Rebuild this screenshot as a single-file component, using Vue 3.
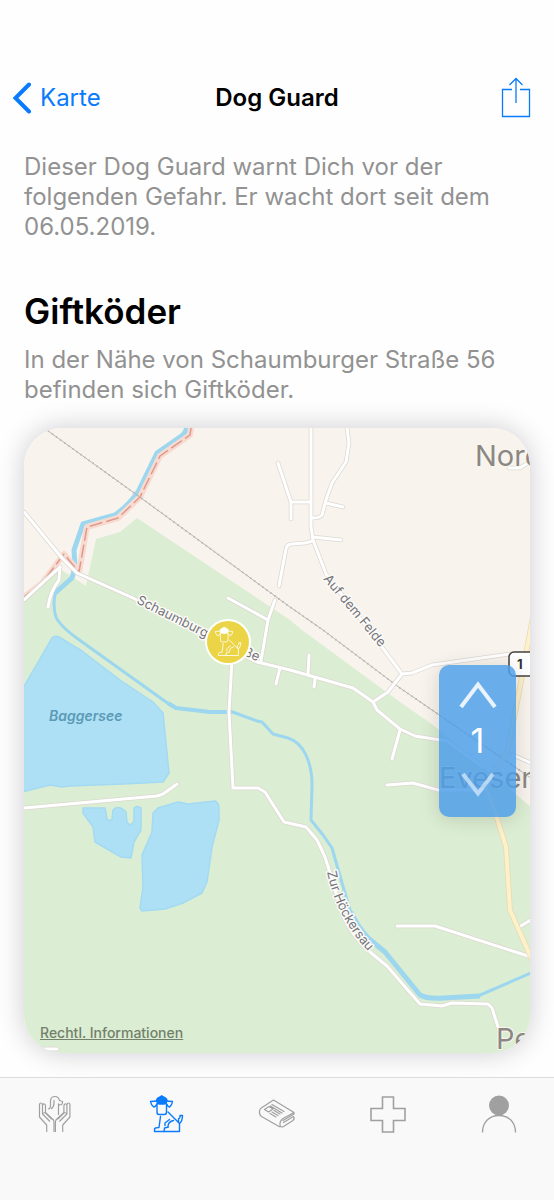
<script setup>
import { ref } from 'vue'

const level = ref(1)
const active = ref('guard')

const roads = [
  'M24 512L62 558L77 573L133 598L200 633L257 662L290 670L353 688L373 702L377 710L400 729L415 736L447 741L483 767',
  'M60 567L24 600',
  'M60 567L59 580Q50 592 48 607',
  'M373 702L388 692L402 674L412 673L432 665L510 654',
  'M402 674L382 647L326 574L313 540L311 527V428',
  'M347 428L349 443L346 462L332 483L326 500L322 515Q320 518 312 518',
  'M326 503L343 507',
  'M278 463L291 502V519M291 502H311',
  'M313 537L341 540',
  'M313 541L305 543L292 544Q287 544 286 549L279 586',
  'M275 600L268 620L261 661M228 598L268 620',
  'M309 655L308 674M280 668L276 684M315 679L314 687',
  'M400 730L392 759',
  'M387 785L413 783L438 790L487 790',
  'M513 755L531 763',
  'M232 660L229 712L233 788H258L265 792L284 822L306 827L317 840L325 857L330 873L342 913Q350 934 370 952L387 966L420 1004L442 1006L452 1003L488 1004L492 1008L499 1030',
  'M397 926H435L531 957',
  'M519 927L531 920',
  'M24 808L157 796L163 794L177 784',
  'M509 468H520L531 461',
  'M40 1049H57',
]
</script>

<template>
  <div class="screen">
    <svg class="defs" width="0" height="0" aria-hidden="true">
      <symbol id="dog" viewBox="0 0 35 38">
        <g fill="none" stroke="currentColor" stroke-linejoin="round" stroke-linecap="round">
          <path d="M7.500 5Q8 3 11 2L12.700 0.800L14.500 2Q17.500 3 18 5L17 8.500Q12.700 9.500 8.500 8.500Z" fill="currentColor" />
          <path d="M8 6L1.500 6.500Q2 10 4.700 12Q7 11.500 7.800 9M17.500 6L23.500 6.500Q23 10 20.700 12Q18.500 11.500 17.700 9" />
          <path d="M8 9.500V17Q8 19.500 10 19.500H15.500Q17.500 19.500 17.500 17V9.500" />
          <path d="M19 17L30.500 28.500Q33.500 26 33.500 20.500H31Q31.500 23 29.500 24V27" />
          <path d="M30.500 28.500V36.500H5.500V34Q6 32.500 10 32.500L11.500 21.500" />
          <path d="M15 36.500L15.500 33L19.500 32M16 30.500V28L20.500 24.500M24.500 25.500Q19.500 26.500 19 31" />
        </g>
      </symbol>
    </svg>

    <header class="nav">
      <a class="back" href="#karte">
        <svg width="20" height="32" viewBox="0 0 20 32" aria-hidden="true">
          <path d="M17 2.500L3.500 16L17 29.500" fill="none" stroke="currentColor" stroke-width="4" stroke-linecap="round" stroke-linejoin="miter" />
        </svg>
        <span>Karte</span>
      </a>
      <h1>Dog Guard</h1>
      <button class="share" type="button" aria-label="Teilen">
        <svg width="30" height="41" viewBox="0 0 30 41" fill="none" stroke="currentColor" stroke-width="1.300" aria-hidden="true">
          <path d="M11 12.500H1.500V39.500H28.500V12.500H19M15 26V1.500M8.500 8L15 1.500L21.500 8" />
        </svg>
      </button>
    </header>

    <main class="content">
      <p class="intro">Dieser Dog Guard warnt Dich vor der folgenden Gefahr. Er wacht dort seit dem 06.05.2019.</p>
      <h2>Giftköder</h2>
      <p>In der Nähe von Schaumburger Straße 56 befinden sich Giftköder.</p>

      <section class="map" aria-label="Karte der Umgebung">
        <svg class="tiles" viewBox="24 428 506 625">
          <rect x="24" y="428" width="507" height="625" fill="#f8f4ed" />
          <path fill="#dbedd2" d="M137 518L290 620L302 630L400 702L433 725L531 807V1053H24V602L60 569L86 586L96 539L120 532Z" />
          <g fill="#ade0f5" stroke="#a3daf3" stroke-width="1.500" stroke-linejoin="round">
            <path d="M22 690L52 638Q55 635 59 637L82 651L120 680L153 702L163 713L169 773L163 782L123 784L70 786L62 787L50 785L22 792Z" />
            <path d="M83 808H105L107 819Q110 822 112 819L113 810Q118 804 126 812L127 823L131 825L134 821V808Q137 805 141 808V830L134 842L131 858L121 857L95 842L93 827L83 813Z" />
            <path d="M153 813L158 808L178 802L188 804L215 801Q219 803 219 808V820L212 847L207 882L202 893L183 903L165 909L142 911L140 908L143 887L142 855L152 832Z" />
          </g>
          <g fill="none" stroke="#9cd7ef" stroke-linejoin="round">
            <path stroke-width="5" d="M187 426Q186 434 180 437L157 453L138 492Q128 506 115 515L83 524L74 550L75 567L72 578L55 593" />
            <path stroke-width="3" d="M56 590Q52 605 56 617Q60 626 78 639L173 707" />
            <path stroke-width="4" d="M168 703L176 708L210 712H232" />
            <path stroke-width="3" d="M230 711L257 721L262 722L273 734L288 738C304 743 312 763 312 785L311 820L323 835L332 848L342 883L350 910L362 932" />
            <path stroke-width="5" d="M351 912Q357 926 368 938L385 952L420 995Q427 999 443 998L480 996" />
            <path stroke-width="3" d="M478 996L531 973" />
          </g>
          <g fill="none" stroke-linejoin="round">
            <path stroke="#f8dbd0" stroke-width="6" d="M191 428L190 435L160 456L140 497L118 518L87 527L79 572L64 554L42 583L24 597" />
            <path stroke="#e0988d" stroke-width="1.500" stroke-dasharray="13 4" d="M191 428L190 435L160 456L140 497L118 518L87 527L79 572L64 554L42 583L24 597" />
          </g>
          <g fill="none" stroke="#b8b4b0">
            <path d="M44 428L137 495L290 607L323 630L400 688L531 778" />
            <path stroke-width="2" stroke-dasharray="1 4" d="M44 428L137 495L290 607L323 630L400 688L531 778" />
          </g>
          <g fill="none" stroke-linecap="round" stroke-linejoin="round">
            <path v-for="(d, i) in roads" :key="'c' + i" :d="d" stroke="#dcd8d2" stroke-width="4.500" />
            <path v-for="(d, i) in roads" :key="'f' + i" :d="d" stroke="#fff" stroke-width="3" />
            <path stroke="#ead9b4" stroke-width="5.500" d="M535 605L517 703L507 753L485 784L497 818L506 847L510 910L533 962" />
            <path stroke="#fdf1c9" stroke-width="4" d="M535 605L517 703L507 753L485 784L497 818L506 847L510 910L533 962" />
          </g>

          <path id="way-schaumburg" fill="none" d="M136 603L202 636L280 672" />
          <path id="way-felde" fill="none" d="M323 579L392 662" />
          <path id="way-hoecker" fill="none" d="M327 872Q338 925 380 963" />
          <g class="street">
            <text><textPath href="#way-schaumburg">Schaumburger Straße</textPath></text>
            <text><textPath href="#way-felde">Auf dem Felde</textPath></text>
            <text><textPath href="#way-hoecker">Zur Höckersau</textPath></text>
          </g>
          <text class="lake" x="49" y="721">Baggersee</text>
          <g class="place">
            <text x="475" y="466">Nord</text>
            <text x="439" y="788">Evesen</text>
            <text x="496" y="1049">Pe</text>
          </g>
          <rect x="509" y="652" width="34" height="24" rx="5" fill="#fff" stroke="#44423e" stroke-width="1.500" />
          <text class="route" x="517" y="669">1</text>

          <g class="pin">
            <circle cx="228" cy="642" r="23" fill="#fff" />
            <circle cx="228" cy="642" r="21" fill="#ebd546" />
            <use href="#dog" x="214" y="626" width="28" height="31" />
          </g>
        </svg>

        <a class="legal" href="#rechtliches">Rechtl. Informationen</a>

        <div class="stepper">
          <button type="button" aria-label="Mehr" @click="level++">
            <svg width="38" height="28" viewBox="0 0 38 28" aria-hidden="true">
              <path d="M2 26L19 3.500L36 26" />
            </svg>
          </button>
          <output>{{ level }}</output>
          <button class="less" type="button" aria-label="Weniger" @click="level = Math.max(1, level - 1)">
            <svg width="34" height="25" viewBox="0 0 34 25" aria-hidden="true">
              <path d="M2 2L17 21.500L32 2" />
            </svg>
          </button>
        </div>
      </section>
    </main>

    <nav class="tabs" aria-label="Hauptnavigation">
      <button type="button" aria-label="Helfen" :class="{ on: active === 'help' }" @click="active = 'help'">
        <svg width="34" height="38" viewBox="0 0 34 38" fill="none" stroke="currentColor" stroke-width="1.200" stroke-linejoin="round" aria-hidden="true">
          <path d="M8.700 37V30L1.500 22V9.500Q1.500 8 3 8Q4.500 8 4.500 10V19L12 26.500M4.500 10Q5 8.500 6.500 9Q7.500 9.500 7.500 11V17.500L15.500 25Q16 26 16 28V37M4.500 19Q6 16.500 8.500 19L13.500 24" />
          <path d="M24.700 37V30L31.900 22V9.500Q31.900 8 30.400 8Q28.900 8 28.900 10V19L21.400 26.500M28.900 10Q28.400 8.500 26.900 9Q25.900 9.500 25.900 11V17.500L17.900 25Q17.400 26 17.400 28V37M28.900 19Q27.400 16.500 24.900 19L19.900 24" />
          <path d="M10 14Q12.500 14 12.500 10V5.500Q13 1.500 17 1.500Q20.500 1.500 21.500 5.500L24.500 6.500Q25 10 21.500 10L20.500 9V20M16 5V8Q16 12 13 14" />
        </svg>
      </button>
      <button type="button" aria-label="Dog Guard" :class="{ on: active === 'guard' }" @click="active = 'guard'">
        <svg width="35" height="38" stroke-width="1.400" aria-hidden="true"><use href="#dog" /></svg>
      </button>
      <button type="button" aria-label="Neuigkeiten" :class="{ on: active === 'news' }" @click="active = 'news'">
        <svg width="38" height="32" viewBox="0 0 38 32" fill="none" stroke="currentColor" stroke-width="1.200" stroke-linejoin="round" stroke-linecap="round" aria-hidden="true">
          <path d="M21.500 28.700L3.500 18.500Q1 16.500 1.500 13Q2 10.500 4 9.500L15.500 2L36 14.500L25 20.500Q21.500 23 22 27Q22.500 30 25.500 28.500L35 22.500Q37 20.500 35.500 18.500L25.500 24.500M36 14.500V16L25 22.500" />
          <path d="M6.500 11.500L11 8.500L15 11L10.500 14ZM14 6.500L26 13.500M12.500 8L18 11.500M18 11.500L24 15M16 12.500L22 16M14 14L20 17.500M12 15.500L18 19" />
        </svg>
      </button>
      <button type="button" aria-label="Erste Hilfe" :class="{ on: active === 'aid' }" @click="active = 'aid'">
        <svg width="36" height="38" viewBox="0 0 36 38" fill="none" stroke="currentColor" stroke-width="1.600" aria-hidden="true">
          <path d="M12.500 2H23.500V13.500H35V25.500H23.500V37H12.500V25.500H1V13.500H12.500Z" />
        </svg>
      </button>
      <button type="button" aria-label="Profil" :class="{ on: active === 'me' }" @click="active = 'me'">
        <svg width="36" height="38" viewBox="0 0 36 38" fill="none" stroke="currentColor" stroke-width="1.300" aria-hidden="true">
          <circle cx="18" cy="10.500" r="10" fill="currentColor" stroke="none" />
          <path d="M1.500 37.500C1.500 27 8.500 20.500 18 20.500S34.500 27 34.500 37.500" />
        </svg>
      </button>
    </nav>
  </div>
</template>

<style>
body {
  background: #fefefe;
}
</style>

<style scoped>
.screen {
  min-height: 100vh;
  display: flex;
  flex-direction: column;
  font-family: Inter, "Liberation Sans", sans-serif;
  background: #fefefe;
  overflow: hidden;
}
.defs {
  position: absolute;
}
button {
  border: 0;
  padding: 0;
  background: none;
  font: inherit;
  color: inherit;
  cursor: pointer;
}
svg {
  display: block;
}
.nav {
  display: grid;
  grid-template-columns: 1fr auto 1fr;
  align-items: center;
  padding: 68px 12px 0;
  height: 60px;
  color: #0a7bfc;
}
.back {
  display: flex;
  align-items: center;
  gap: 8px;
  color: inherit;
  text-decoration: none;
  font-size: 24px;
  line-height: 30px;
}
.nav h1 {
  margin: 0;
  font-size: 24px;
  line-height: 30px;
  font-weight: 600;
  color: #000;
}
.share {
  justify-self: end;
  padding: 0 11px 2px;
}
.content {
  flex: 1;
  padding: 24px;
}
.content p {
  margin: 0;
  font-size: 24px;
  line-height: 30px;
  color: #929292;
}
.content h2 {
  margin: 48px 0 13px;
  font-size: 35px;
  line-height: 42px;
  font-weight: 600;
  color: #000;
}
.map {
  position: relative;
  margin-top: 23px;
  border-radius: 38px;
  box-shadow: 0 0 28px rgba(0, 0, 30, 0.2);
}
.tiles {
  width: 100%;
  height: auto;
  border-radius: inherit;
  overflow: hidden;
}
.street text {
  font-size: 13px;
  fill: #74747b;
  stroke: #fbfaf6;
  stroke-width: 3px;
  stroke-linejoin: round;
  paint-order: stroke;
}
.lake {
  font-size: 14px;
  font-style: italic;
  font-weight: 600;
  fill: #5b9ab5;
}
.place text {
  font-size: 29px;
  fill: #8b8883;
  stroke: #f9f6f0;
  stroke-width: 2px;
  paint-order: stroke;
}
.route {
  font-size: 13px;
  font-weight: 700;
  fill: #33312e;
}
.pin {
  color: #fff;
}
.legal {
  position: absolute;
  left: 16px;
  bottom: 12px;
  font-size: 14px;
  line-height: 16px;
  font-weight: 500;
  color: #72806c;
  text-decoration: underline;
}
.stepper {
  position: absolute;
  top: 237px;
  right: 14px;
  width: 77px;
  height: 152px;
  box-sizing: border-box;
  padding: 16px 0;
  display: flex;
  flex-direction: column;
  align-items: center;
  justify-content: space-between;
  border-radius: 10px;
  background: rgba(77, 159, 234, 0.84);
  box-shadow: 0 2px 20px rgba(0, 0, 0, 0.14);
  color: #fff;
}
.stepper path {
  fill: none;
  stroke: #fff;
  stroke-width: 4;
  opacity: 0.85;
}
.stepper .less {
  padding-bottom: 4px;
}
.stepper .less path {
  opacity: 0.55;
}
.stepper output {
  font-size: 34px;
  line-height: 40px;
}
.tabs {
  display: grid;
  grid-template-columns: repeat(5, 1fr);
  align-items: start;
  height: 105px;
  padding-top: 17px;
  position: relative;
  background: #f9f9f9;
  border-top: 1px solid #dcdcdc;
  color: #a0a0a0;
}
.tabs button {
  display: flex;
  justify-content: center;
  align-items: center;
  height: 38px;
}
.tabs .on {
  color: #0a7bfc;
}
</style>
